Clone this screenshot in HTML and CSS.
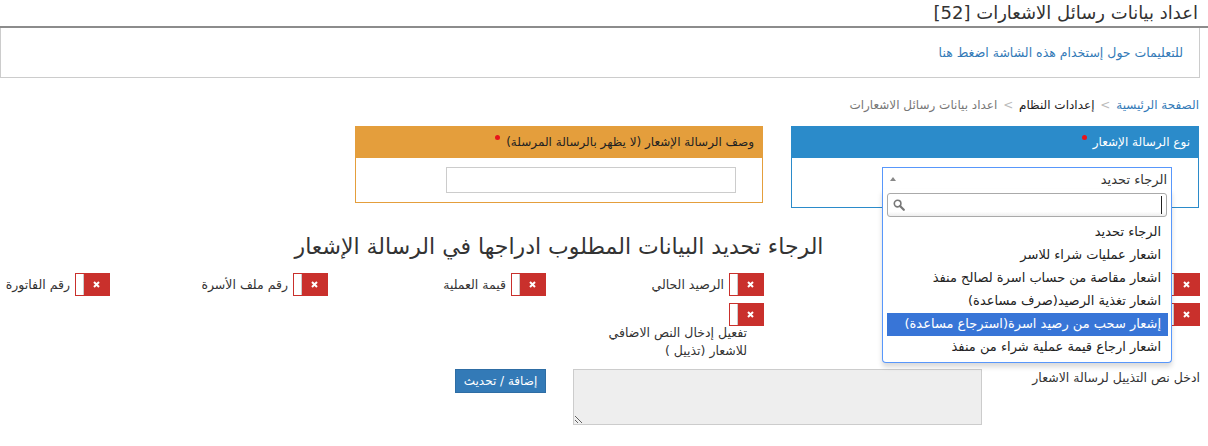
FILE: index.html
```html
<!DOCTYPE html>
<html lang="ar" dir="rtl">
<head>
    <meta charset="UTF-8">
    <title>اعداد بيانات رسائل الاشعارات</title>
    <link rel="stylesheet" href="styles.css">
</head>
<body>
    <div class="page">
        <h1 class="page-title">اعداد بيانات رسائل الاشعارات [52]</h1>
        <div class="help-box">
            <a href="#" class="help-link">للتعليمات حول إستخدام هذه الشاشة اضغط هنا</a>
        </div>
        <div class="crumbs">
            <a href="#" class="crumb-home">الصفحة الرئيسية</a>
            <span class="crumb-sep">&gt;</span>
            <span class="crumb-mid">إعدادات النظام</span>
            <span class="crumb-sep">&gt;</span>
            <span class="crumb-current">اعداد بيانات رسائل الاشعارات</span>
        </div>

        <div class="panels">
            <div class="panel panel-blue">
                <div class="panel-head">نوع الرسالة الإشعار <span class="req"></span></div>
                <div class="panel-body">
                    <div class="select-wrap">
                        <div class="select-box">
                            <span>الرجاء تحديد</span>
                            <span class="select-arrow"></span>
                        </div>
                        <div class="dropdown">
                            <div class="search-box">
                                <svg class="search-icon" width="12" height="12" viewBox="0 0 12 12">
                                    <circle cx="4.6" cy="4.6" r="3.3" fill="none" stroke="#777" stroke-width="1.6"/>
                                    <path d="M7 7 L10.8 10.8" stroke="#777" stroke-width="2.2" stroke-linecap="round"/>
                                </svg>
                                <span class="caret"></span>
                            </div>
                            <ul class="results">
                                <li>الرجاء تحديد</li>
                                <li>اشعار عمليات شراء للاسر</li>
                                <li>اشعار مقاصة من حساب اسرة لصالح منفذ</li>
                                <li>اشعار تغذية الرصيد(صرف مساعدة)</li>
                                <li class="active">إشعار سحب من رصيد اسرة(استرجاع مساعدة)</li>
                                <li>اشعار ارجاع قيمة عملية شراء من منفذ</li>
                            </ul>
                        </div>
                    </div>
                </div>
            </div>
            <div class="panel panel-orange">
                <div class="panel-head">وصف الرسالة الإشعار (لا يظهر بالرسالة المرسلة) <span class="req"></span></div>
                <div class="panel-body">
                    <input type="text" class="text-input">
                </div>
            </div>
        </div>

        <h2 class="fields-title">الرجاء تحديد البيانات المطلوب ادراجها في الرسالة الإشعار</h2>

        <div class="fields-row">
            <div class="field-col"><span class="switch"><span class="knob"></span><span class="mark"><svg width="7" height="7" viewBox="0 0 7 7"><path d="M1 1 L6 6 M6 1 L1 6" stroke="#fff" stroke-width="2"/></svg></span></span></div>
            <div class="field-col"><span class="switch"><span class="knob"></span><span class="mark"><svg width="7" height="7" viewBox="0 0 7 7"><path d="M1 1 L6 6 M6 1 L1 6" stroke="#fff" stroke-width="2"/></svg></span></span></div>
            <div class="field-col"><span class="switch"><span class="knob"></span><span class="mark"><svg width="7" height="7" viewBox="0 0 7 7"><path d="M1 1 L6 6 M6 1 L1 6" stroke="#fff" stroke-width="2"/></svg></span></span><label>الرصيد الحالي</label></div>
            <div class="field-col"><span class="switch"><span class="knob"></span><span class="mark"><svg width="7" height="7" viewBox="0 0 7 7"><path d="M1 1 L6 6 M6 1 L1 6" stroke="#fff" stroke-width="2"/></svg></span></span><label>قيمة العملية</label></div>
            <div class="field-col"><span class="switch"><span class="knob"></span><span class="mark"><svg width="7" height="7" viewBox="0 0 7 7"><path d="M1 1 L6 6 M6 1 L1 6" stroke="#fff" stroke-width="2"/></svg></span></span><label>رقم ملف الأسرة</label></div>
            <div class="field-col"><span class="switch"><span class="knob"></span><span class="mark"><svg width="7" height="7" viewBox="0 0 7 7"><path d="M1 1 L6 6 M6 1 L1 6" stroke="#fff" stroke-width="2"/></svg></span></span><label>رقم الفاتورة</label></div>
        </div>
        <div class="fields-row row-two">
            <div class="field-col"><span class="switch"><span class="knob"></span><span class="mark"><svg width="7" height="7" viewBox="0 0 7 7"><path d="M1 1 L6 6 M6 1 L1 6" stroke="#fff" stroke-width="2"/></svg></span></span></div>
            <div class="field-col"><span class="switch"><span class="knob"></span><span class="mark"><svg width="7" height="7" viewBox="0 0 7 7"><path d="M1 1 L6 6 M6 1 L1 6" stroke="#fff" stroke-width="2"/></svg></span></span></div>
            <div class="field-col field-stack"><span class="switch"><span class="knob"></span><span class="mark"><svg width="7" height="7" viewBox="0 0 7 7"><path d="M1 1 L6 6 M6 1 L1 6" stroke="#fff" stroke-width="2"/></svg></span></span><label>تفعيل إدخال النص الاضافي للاشعار (تذييل )</label></div>
        </div>

        <div class="footer-row">
            <label class="footer-label">ادخل نص التذييل لرسالة الاشعار</label>
            <textarea class="footer-text" disabled></textarea>
            <button class="save-btn">إضافة / تحديث</button>
        </div>
    </div>
</body>
</html>
```

FILE: styles.css
```css
body {
    margin: 0;
    font-family: "DejaVu Sans", sans-serif;
    font-size: 12.5px;
    color: #333;
    background: #fff;
    overflow-x: hidden;
}

.page {
    padding-right: 8px;
}

.page-title {
    margin: 0 -8px 0 0;
    padding-right: 10px;
    height: 26px;
    line-height: 26px;
    font-size: 18px;
    font-weight: normal;
    color: #333;
    border-bottom: 2px solid #8c8c8c;
}

.help-box {
    height: 49px;
    border: 1px solid #ccc;
    border-top: none;
    padding-right: 16px;
    display: flex;
    align-items: center;
}

.help-link {
    color: #337ab7;
    text-decoration: none;
}

.crumbs {
    padding: 18px 1px 0 0;
    line-height: 18px;
    font-size: 12px;
}

.crumb-home {
    color: #337ab7;
    text-decoration: none;
}

.crumb-sep {
    color: #bbb;
    padding: 0 2px;
}

.crumb-mid {
    color: #222;
}

.crumb-current {
    color: #777;
}

/* panels */
.panels {
    display: flex;
    align-items: flex-start;
    gap: 28px;
    margin-top: 12px;
    padding-right: 1px;
}

.panel {
    width: 406px;
    border: 1px solid;
    border-top: none;
}

.panel-head {
    height: 32px;
    line-height: 32px;
    padding-right: 8px;
    font-size: 12px;
}

.req {
    display: inline-block;
    width: 5px;
    height: 5px;
    border-radius: 50%;
    background: #e8141b;
    vertical-align: 6px;
    margin-right: 2px;
}

.panel-blue {
    border-color: #2b8bca;
}

.panel-blue .panel-head {
    background: #2b8bca;
    color: #fff;
}

.panel-blue .panel-body {
    height: 49px;
    padding: 9px 26px 0 0;
    box-sizing: border-box;
}

.panel-orange {
    border-color: #e49e3c;
}

.panel-orange .panel-head {
    background: #e49e3c;
    color: #222;
}

.panel-orange .panel-body {
    height: 44px;
    padding: 9px 26px 0 0;
    box-sizing: border-box;
}

.text-input {
    display: block;
    width: 290px;
    height: 26px;
    box-sizing: border-box;
    border: 1px solid #ccc;
    margin: 0;
}

/* select2 style dropdown */
.select-wrap {
    position: relative;
    width: 290px;
    font-size: 13px;
}

.select-box {
    height: 23px;
    border: 1px solid #5897fb;
    border-bottom: none;
    box-sizing: border-box;
    display: flex;
    justify-content: space-between;
    align-items: center;
    padding: 0 4px 0 7px;
    color: #333;
    background: #fff;
}

.select-arrow {
    width: 0;
    height: 0;
    border-left: 3px solid transparent;
    border-right: 3px solid transparent;
    border-bottom: 4px solid #888;
}

.dropdown {
    position: absolute;
    top: 22px;
    left: 0;
    right: 0;
    z-index: 10;
    background: #fff;
    border: 1px solid #5897fb;
    border-top: none;
    border-radius: 0 0 4px 4px;
    box-shadow: 0 4px 5px rgba(0, 0, 0, 0.15);
    padding-top: 4px;
}

.search-box {
    position: relative;
    height: 24px;
    margin: 0 4px;
    border: 1px solid #aaa;
    border-radius: 3px;
    box-sizing: border-box;
    background: linear-gradient(#fff 80%, #eee);
}

.search-icon {
    position: absolute;
    left: 5px;
    top: 5px;
}

.caret {
    position: absolute;
    right: 4px;
    top: 2px;
    width: 1px;
    height: 18px;
    background: #222;
}

.results {
    list-style: none;
    margin: 4px 3px 3px 4px;
    padding: 0;
}

.results li {
    padding: 3px 7px 4px;
    line-height: 16px;
    color: #222;
}

.results li.active {
    background: #3875d7;
    color: #fff;
}

/* fields */
.fields-title {
    margin: 24px 82px 0 0;
    line-height: 30px;
    font-size: 22px;
    font-weight: normal;
    text-align: center;
    color: #333;
}

.fields-row {
    display: flex;
    align-items: flex-start;
    margin-top: 11px;
}

.row-two {
    margin-top: 7px;
}

.field-col {
    flex-shrink: 0;
    width: 218px;
    display: flex;
    align-items: center;
    gap: 5px;
}

.field-col label {
    white-space: nowrap;
}

.field-stack {
    flex-direction: column;
    align-items: flex-start;
    gap: 0;
}

.field-stack label {
    white-space: normal;
    width: 145px;
    margin: -2px 17px 0 0;
    line-height: 18px;
}

.switch {
    direction: ltr;
    display: inline-flex;
    width: 35px;
    height: 23px;
    box-sizing: border-box;
    border: 1px solid #c9302c;
    background: #c9302c;
}

.knob {
    width: 7px;
    background: #fff;
    border-right: 1px solid #ccc;
}

.mark {
    flex: 1;
    display: flex;
    align-items: center;
    justify-content: center;
}

/* footer */
.footer-row {
    display: flex;
    align-items: flex-start;
    margin-top: 9px;
}

.footer-label {
    width: 218px;
    flex-shrink: 0;
    line-height: 18px;
}

.footer-text {
    width: 409px;
    height: 56px;
    box-sizing: border-box;
    margin: 0;
    border: 1px solid #ccc;
    background: #eee;
    resize: vertical;
}

.save-btn {
    margin-right: 27px;
    width: 91px;
    height: 24px;
    padding: 0;
    border: 1px solid #2e6da4;
    background: #337ab7;
    color: #fff;
    font-family: "DejaVu Sans", sans-serif;
    font-size: 12px;
}
```
